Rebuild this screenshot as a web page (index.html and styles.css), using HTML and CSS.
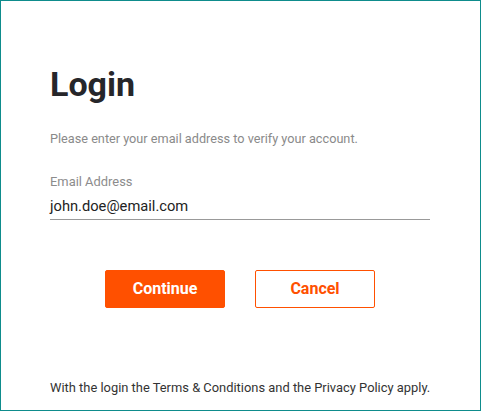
FILE: index.html
```html
<!DOCTYPE html>
<html lang="en">
<head>
<meta charset="utf-8">
<title>Login</title>
<link rel="stylesheet" href="styles.css">
</head>
<body>
<div class="frame">
  <h1 class="title">Login</h1>
  <p class="lead">Please enter your email address to verify your account.</p>
  <div class="field">
    <label class="field-label" for="email">Email Address</label>
    <div class="field-input" id="email">john.doe@email.com</div>
  </div>
  <div class="actions">
    <button class="btn btn-primary" type="button">Continue</button>
    <button class="btn btn-secondary" type="button">Cancel</button>
  </div>
  <p class="footnote">With the login the Terms &amp; Conditions and the Privacy Policy apply.</p>
</div>
</body>
</html>
```

FILE: styles.css
```css
html, body {
  margin: 0;
  padding: 0;
  background: #ffffff;
}

body {
  font-family: Roboto, "Liberation Sans", Arial, sans-serif;
}

.frame {
  box-sizing: border-box;
  width: 481px;
  height: 411px;
  border: 1px solid #0e8c8c;
  padding: 63px 50px 0 49px;
  display: flex;
  flex-direction: column;
}

.title {
  margin: 0;
  font-size: 34px;
  line-height: 40px;
  font-weight: 700;
  color: #26262a;
}

.lead {
  margin: 27px 0 0 0;
  font-size: 12.7px;
  line-height: 16px;
  color: #8a8a8a;
}

.field {
  margin-top: 27px;
  display: flex;
  flex-direction: column;
}

.field-label {
  font-size: 12.9px;
  line-height: 16px;
  color: #8c8c8c;
}

.field-input {
  margin-top: 6px;
  font-size: 14.7px;
  line-height: 20px;
  color: #222222;
  padding-bottom: 3px;
  border-bottom: 1px solid #999999;
}

.actions {
  margin-top: 50px;
  display: flex;
  justify-content: center;
  gap: 30px;
}

.btn {
  box-sizing: border-box;
  width: 120px;
  height: 38px;
  border-radius: 2px;
  border: 1px solid #ff5000;
  font-family: Roboto, "Liberation Sans", Arial, sans-serif;
  font-size: 16px;
  font-weight: 700;
  line-height: 36px;
  padding: 0;
  cursor: pointer;
}

.btn-primary {
  background: #ff5000;
  color: #ffffff;
}

.btn-secondary {
  background: #ffffff;
  color: #ff5000;
}

.footnote {
  margin: 72px 0 0 0;
  font-size: 12.9px;
  line-height: 16px;
  color: #333333;
  white-space: nowrap;
}
```
